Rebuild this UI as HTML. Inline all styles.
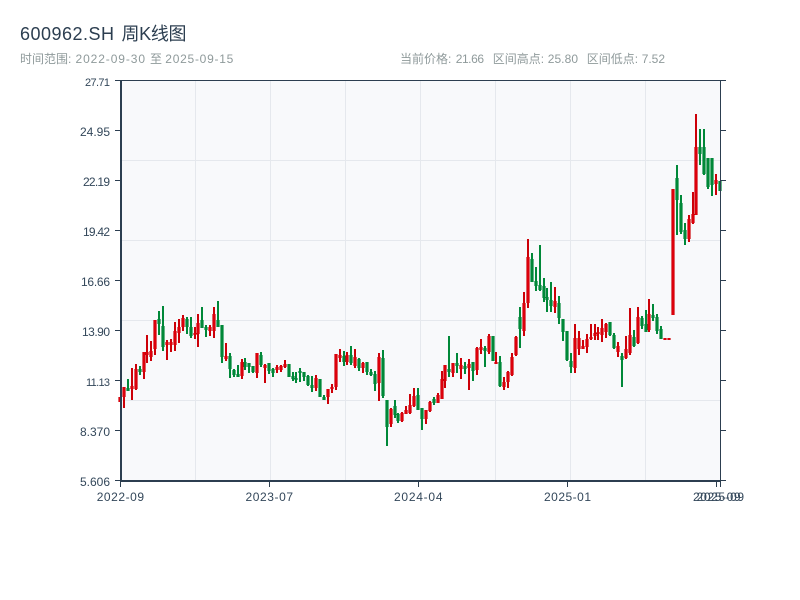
<!DOCTYPE html>
<html><head><meta charset="utf-8"><style>
html,body{margin:0;padding:0;background:#fff}
svg{display:block;font-family:"WenQuanYi Zen Hei","Liberation Sans","Noto Sans CJK SC",sans-serif}
</style></head><body>
<svg width="800" height="600" viewBox="0 0 800 600" xmlns="http://www.w3.org/2000/svg">
<defs>
<path id="rb" d="M120 397V402M124 387V397M132 386V389M136 369V389M144 352V372M147 352V355M151 351V357M155 320V349M167 342V345M171 342V345M175 331V345M179 327V333M183 318V327M195 333V335M198 323V334M210 327V331M214 314V331M226 356V359M242 362V376M257 353V373M265 365V368M277 367V370M281 366V370M285 364V367M316 378V388M328 389V397M332 387V389M336 354V387M340 355V358M347 355V362M355 357V366M363 363V368M379 357V383M391 409V424M402 413V421M406 410V414M410 405V413M414 396V406M426 410V419M430 402V411M438 395V403M442 379V399M445 365V381M453 363V373M461 365V369M469 364V368M477 348V370M481 347V350M489 336V352M496 362V364M504 382V387M508 372V382M512 357V375M516 337V355M524 303V331M528 257V303M555 301V307M575 338V368M579 338V349M583 346V349M587 339V347M591 337V339M595 333V336M598 332V334M602 328V335M606 324V332M618 346V352M626 349V358M630 335V353M638 317V343M649 314V330M665 338V340M669 338V340M673 189V315M689 219V239M693 214V223M696 147V215M716 180V184"/>
</defs>
<rect x="121" y="81" width="599" height="399" fill="#f8f9fb"/>
<g fill="#e5e8ed">
<rect x="121" y="160" width="599" height="1"/><rect x="121" y="240" width="599" height="1"/><rect x="121" y="320" width="599" height="1"/><rect x="121" y="400" width="599" height="1"/>
<rect x="195" y="81" width="1" height="399"/><rect x="270" y="81" width="1" height="399"/><rect x="345" y="81" width="1" height="399"/><rect x="420" y="81" width="1" height="399"/><rect x="495" y="81" width="1" height="399"/><rect x="570" y="81" width="1" height="399"/><rect x="645" y="81" width="1" height="399"/>
</g>
<g fill="none">
<path stroke="#008838" stroke-width="2" d="M128 379V391M140 366V375M159 311V335M163 306V351M187 317V334M191 317V338M202 307V328M206 325V337M218 301V327M222 325V363M230 353V378M234 369V377M238 365V377M245 358V370M249 363V373M253 366V373M261 352V367M269 363V374M273 368V377M289 364V377M293 372V381M296 372V383M300 368V382M304 372V381M308 375V386M312 376V392M320 379V397M324 395V400M344 351V366M351 346V365M359 358V371M367 362V375M371 369V376M375 371V391M383 350V398M387 400V446M395 400V418M398 413V423M418 388V410M422 408V430M434 397V405M449 336V377M457 353V373M465 362V374M473 362V381M485 346V367M493 336V361M500 356V387M520 307V348M532 253V282M536 267V291M540 245V291M544 278V302M547 288V312M551 282V312M559 296V324M563 319V341M567 331V361M571 353V373M610 322V336M614 333V349M622 353V387M634 330V347M642 316V329M646 310V332M653 304V321M657 314V334M661 326V339M677 165V235M681 195V234M685 223V245M700 129V165M704 129V175M708 158V189M712 158V196M720 181V191"/>
<path stroke="#008838" stroke-width="3.2" d="M128 388V391M140 369V372M159 319V324M163 326V347M187 319V327M191 327V336M202 320V328M206 327V330M218 320V327M222 325V357M230 356V369M234 370V375M238 374V377M245 362V367M249 363V367M253 366V372M261 355V365M269 363V371M273 369V373M289 364V377M293 376V379M296 378V380M300 371V373M304 372V377M308 376V385M312 385V388M320 379V397M324 397V400M344 356V362M351 355V363M359 359V368M367 362V372M371 372V375M375 374V384M383 358V396M387 400V427M395 406V415M398 414V421M418 395V410M422 408V419M434 399V403M449 369V372M457 363V366M465 366V369M473 362V371M485 348V351M493 336V361M500 362V386M520 317V329M532 259V282M536 281V286M540 285V290M544 286V298M547 297V300M551 300V306M559 303V318M563 319V332M567 331V360M571 361V367M610 322V335M614 335V348M622 356V360M634 337V346M642 318V326M646 324V332M653 315V318M657 317V331M661 329V339M677 178V200M681 203V232M685 230V239M700 147V154M704 147V174M708 158V187M712 158V185M720 181V191"/>
<path stroke="#cc0008" stroke-width="2" d="M120 397V402M124 387V408M132 368V400M136 364V390M144 352V379M147 335V363M151 341V361M155 320V355M167 340V360M171 339V352M175 322V351M179 319V343M183 315V331M195 327V339M198 314V347M210 325V336M214 307V338M226 343V361M242 359V379M257 353V378M265 364V383M277 365V373M281 365V372M285 360V368M316 375V391M328 389V404M332 384V393M336 354V390M340 349V362M347 352V365M355 349V368M363 362V373M379 353V401M391 408V427M402 412V422M406 406V414M410 394V414M414 388V407M426 410V424M430 401V412M438 393V403M442 371V399M445 365V388M453 363V377M461 358V379M469 359V390M477 347V375M481 339V354M489 334V354M496 352V364M504 377V390M508 371V388M512 353V376M516 336V356M524 292V336M528 239V308M555 287V313M575 324V373M579 331V355M583 340V349M587 334V353M591 324V340M595 324V340M598 327V340M602 319V342M606 323V338M618 342V357M626 336V359M630 308V355M638 307V344M649 299V332M665 338V340M669 338V340M673 189V315M689 215V242M693 192V224M696 114V215M716 174V195"/>
<use href="#rb" stroke="#cc0008" stroke-width="3.2"/>
<use href="#rb" stroke="#e8000e" stroke-width="1.2"/>
</g>
<g fill="#2c3e50">
<rect x="120" y="80" width="2" height="402"/>
<rect x="120" y="480" width="601" height="2"/>
<rect x="720" y="80" width="1" height="401"/>
<rect x="115" y="80" width="611" height="1"/>
<rect x="115" y="130" width="5" height="1"/><rect x="115" y="180" width="5" height="1"/><rect x="115" y="230" width="5" height="1"/><rect x="115" y="280" width="5" height="1"/><rect x="115" y="330" width="5" height="1"/><rect x="115" y="380" width="5" height="1"/><rect x="115" y="430" width="5" height="1"/><rect x="115" y="480" width="5" height="1"/>
<rect x="721" y="130" width="5" height="1"/><rect x="721" y="180" width="5" height="1"/><rect x="721" y="230" width="5" height="1"/><rect x="721" y="280" width="5" height="1"/><rect x="721" y="330" width="5" height="1"/><rect x="721" y="380" width="5" height="1"/><rect x="721" y="430" width="5" height="1"/><rect x="721" y="480" width="5" height="1"/>
<rect x="120" y="482" width="1" height="5"/><rect x="269" y="482" width="1" height="5"/><rect x="418" y="482" width="1" height="5"/><rect x="567" y="482" width="1" height="5"/><rect x="716" y="482" width="1" height="5"/><rect x="720" y="482" width="1" height="5"/>
</g>
<g font-size="18" fill="#2c3e50">
<text x="20" y="40" textLength="94">600962.SH</text>
<text x="121.5" y="40" textLength="65">周K线图</text>
</g>
<g font-size="12" fill="#8f9a9b">
<text x="20" y="63">时间范围:</text>
<text x="75.5" y="63" textLength="69.5">2022-09-30</text>
<text x="150" y="63">至</text>
<text x="165.3" y="63" textLength="68">2025-09-15</text>
<text x="400" y="63">当前价格:</text>
<text x="455.7" y="63" textLength="28.3">21.66</text>
<text x="492.7" y="63">区间高点:</text>
<text x="547.7" y="63" textLength="30.3">25.80</text>
<text x="586.7" y="63">区间低点:</text>
<text x="641.7" y="63" textLength="23.3">7.52</text>
</g>
<g font-size="12" fill="#33475a">
<text x="85" y="86" font-size="11" textLength="25">27.71</text>
<text x="80" y="136" textLength="30">24.95</text>
<text x="83" y="186" textLength="27">22.19</text>
<text x="83" y="236" textLength="27">19.42</text>
<text x="81" y="286" textLength="29">16.66</text>
<text x="82" y="336" textLength="28">13.90</text>
<text x="86" y="386" font-size="11" textLength="24">11.13</text>
<text x="80" y="436" textLength="30">8.370</text>
<text x="80" y="486" textLength="30">5.606</text>
<text x="96.7" y="501" textLength="47.3">2022-09</text>
<text x="245.5" y="501" textLength="47.5">2023-07</text>
<text x="394" y="501" textLength="48.5">2024-04</text>
<text x="544" y="501" textLength="47">2025-01</text>
<text x="693" y="501" textLength="47.5">2025-09</text>
<text x="696.6" y="501" textLength="47.5">2025-09</text>
</g>
</svg>
</body></html>
